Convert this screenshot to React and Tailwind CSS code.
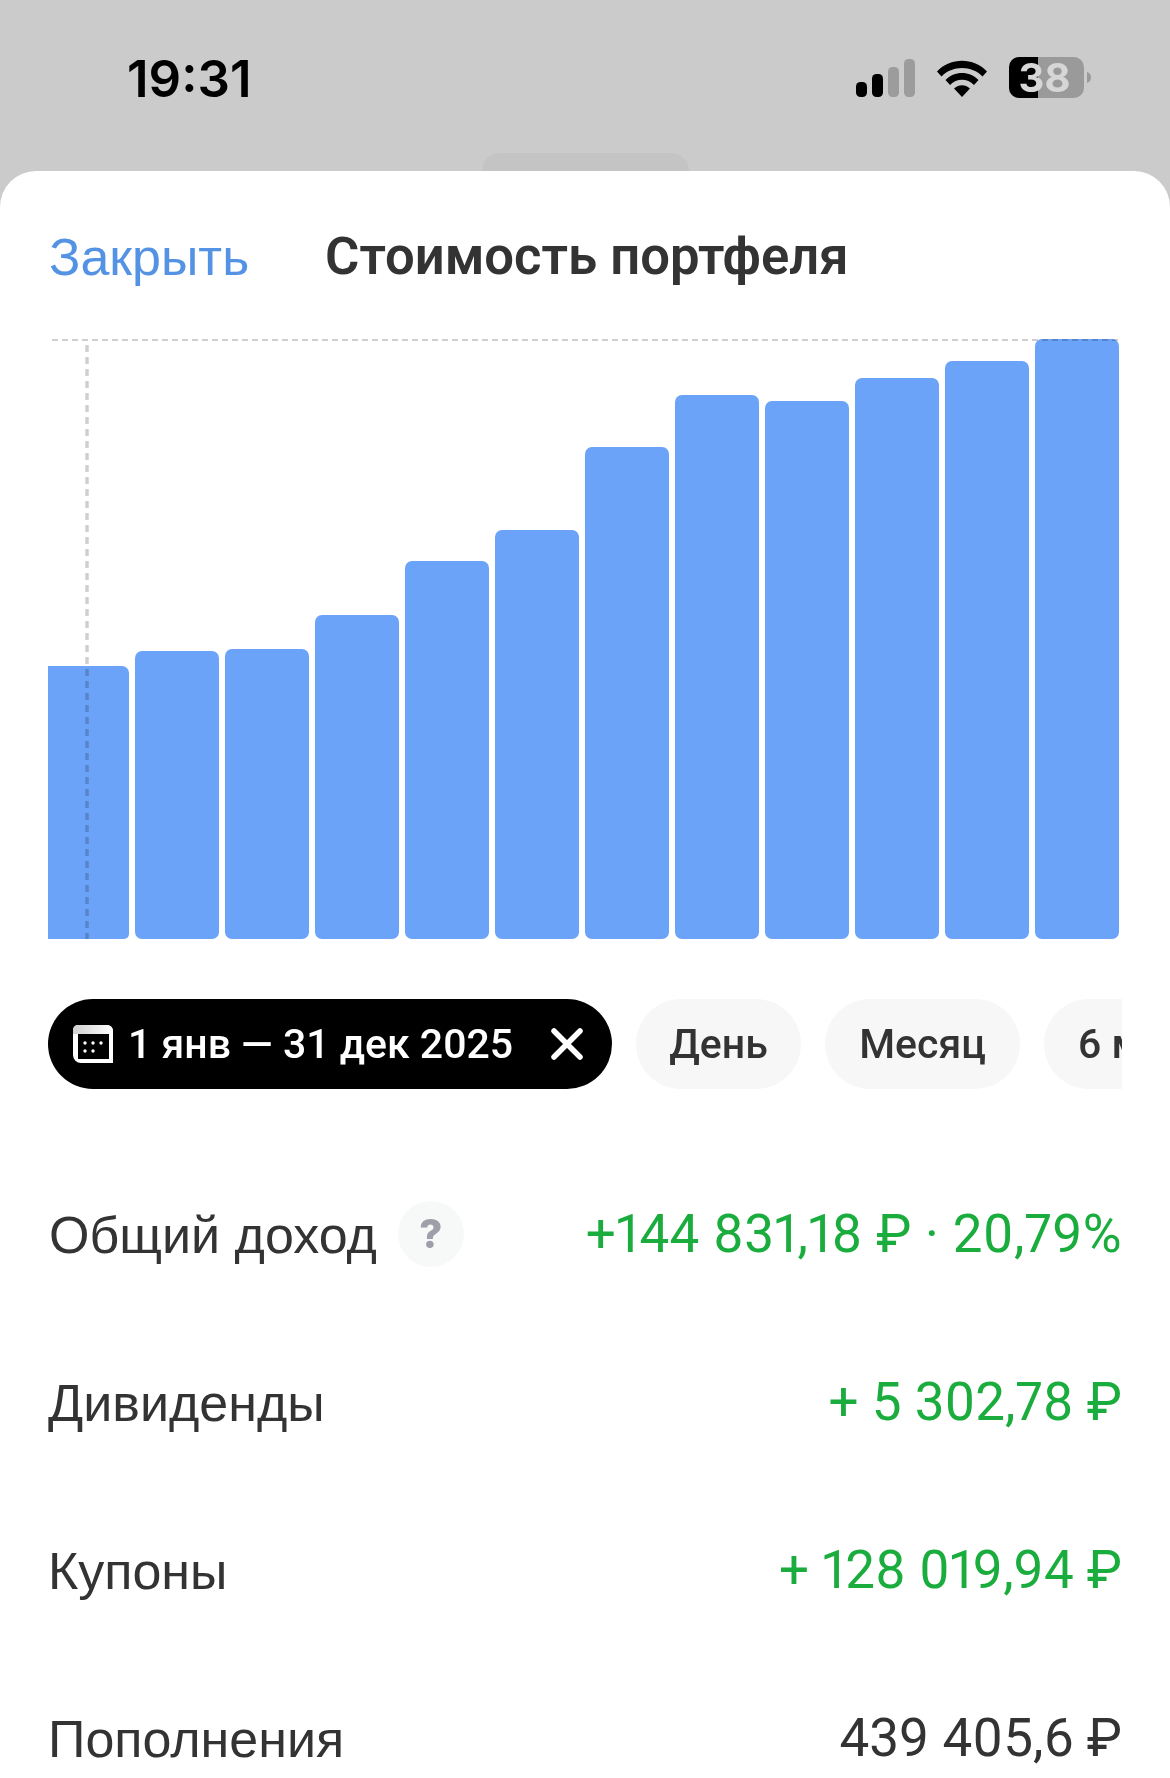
const bars = [273, 288, 290, 324, 378, 409, 492, 544, 538, 561, 578, 600];
const rows = [
  { label: "Дивиденды", value: "+ 5 302,78 ₽", green: true },
  { label: "Купоны", value: "+ 128 019,94 ₽", green: true },
  { label: "Пополнения", value: "439 405,6 ₽", green: false },
];
const labelFont = "pt-[1px] font-['Liberation_Sans',sans-serif] text-[52px] text-[#333333]";
const valueFont = "pt-[2px] font-['Roboto',sans-serif] text-[53px] proportional-nums";

function StatusIcons() {
  return (
    <svg width="240" height="44" viewBox="0 0 240 44" className="block">
      <rect x="5" y="26" width="11" height="15" rx="4.5" fill="#000" />
      <rect x="21" y="18" width="11" height="23" rx="4.5" fill="#000" />
      <rect x="37" y="11" width="11" height="30" rx="4.5" fill="#9c9c9c" />
      <rect x="53" y="3" width="11" height="38" rx="4.5" fill="#9c9c9c" />
      <path d="M86 15.5 C99 1 123 1 136 15.5 L131.5 20.5 C121 9 101 9 90.5 20.5 Z" fill="#000" />
      <path d="M94.5 24 C103 14.5 119 14.5 127.5 24 L123 29 C116.5 22 105.5 22 99 29 Z" fill="#000" />
      <path d="M103 32.5 C107.5 28 114.5 28 119 32.5 L111 41 Z" fill="#000" />
      <rect x="158" y="1" width="75" height="41" rx="10" fill="#9a9a9a" />
      <path d="M168 1 H187 V42 H168 A10 10 0 0 1 158 32 V11 A10 10 0 0 1 168 1 Z" fill="#000" />
      <path d="M236 16 C239 17 240 19 240 21.5 C240 24 239 26 236 27 Z" fill="#9a9a9a" />
    </svg>
  );
}

function CalendarIcon() {
  return (
    <svg width="40" height="38" viewBox="0 0 40 38" className="shrink-0">
      <defs>
        <linearGradient id="calTop" x1="0" y1="0" x2="1" y2="0">
          <stop offset="0" stopColor="#d0d0d0" />
          <stop offset="1" stopColor="#ffffff" />
        </linearGradient>
      </defs>
      <path d="M5 0 H34 A6 6 0 0 1 40 6 V38 H8 A8 8 0 0 1 0 30 V5 A5 5 0 0 1 5 0 Z" fill="#fff" />
      <path d="M5 0 H34 A6 6 0 0 1 40 6 V9 H0 V5 A5 5 0 0 1 5 0 Z" fill="url(#calTop)" />
      <rect x="5" y="9" width="31" height="25" fill="#000" />
      <g fill="#fff">
        <circle cx="12" cy="18" r="1.7" /><circle cx="20" cy="18" r="1.7" /><circle cx="28" cy="18" r="1.7" />
        <circle cx="12" cy="26" r="1.7" /><circle cx="20" cy="26" r="1.7" />
      </g>
    </svg>
  );
}

export default function App() {
  return (
    <div className="w-[1170px] h-[1778px] overflow-hidden bg-[#cbcbcb] flex flex-col">
      <div className="h-[153px] shrink-0 flex justify-between pl-[127px] pr-[79px] pt-[49px]">
        <span className="font-['Inter',sans-serif] font-semibold text-[51px] leading-[60px] text-black">19:31</span>
        <div className="relative h-[44px] mt-[7px]">
          <StatusIcons />
          <span className="absolute right-[9px] top-0 w-[75px] text-center font-['Inter',sans-serif] font-bold text-[40px] leading-[43px] text-[#d6d6d6]">38</span>
        </div>
      </div>
      <div className="h-[18px] shrink-0 flex justify-center">
        <div className="w-[207px] h-[18px] rounded-t-[30px] bg-[#c4c4c4]" />
      </div>
      <div className="flex-1 shrink-0 bg-white rounded-t-[36px] flex flex-col">
        <div className="h-[168px] shrink-0 pt-[3px] pl-[49px] flex items-center">
          <span className="w-[277px] font-['Liberation_Sans',sans-serif] text-[52px] text-[#5492e4]">Закрыть</span>
          <span className="-ml-[1px] font-['Roboto',sans-serif] font-semibold text-[52.6px] text-[#333333]">Стоимость портфеля</span>
        </div>
        <div className="relative ml-[48px] w-[1071px] h-[600px] flex items-end gap-[6px] shrink-0">
          {bars.map((h, i) => (
            <div
              key={i}
              className={i === 0 ? "w-[81px] bg-[#6ba3f9] rounded-tr-[7px] rounded-br-[5px]" : "w-[84px] bg-[#6ba3f9] rounded-[7px]"}
              style={{ height: h }}
            />
          ))}
          <svg width="1071" height="600" viewBox="0 0 1071 600" className="absolute left-0 top-0 mix-blend-multiply">
            <line x1="4" y1="1" x2="1071" y2="1" stroke="#cfcfcf" strokeWidth="2" strokeDasharray="6 4" />
            <line x1="39" y1="6" x2="39" y2="600" stroke="#cfcfcf" strokeWidth="3.5" strokeDasharray="7 5" />
          </svg>
        </div>
        <div className="mt-[60px] ml-[48px] w-[1074px] h-[90px] overflow-hidden flex gap-[24px] shrink-0 font-['Roboto',sans-serif] font-medium text-[41px] text-[#333333]">
          <div className="w-[564px] shrink-0 h-[90px] rounded-full bg-black text-white flex items-center pl-[25px]">
            <CalendarIcon />
            <span className="ml-[15px] pt-[2px] w-[386px] whitespace-nowrap">1 янв — 31 дек 2025</span>
            <svg width="32" height="32" viewBox="0 0 32 32" className="ml-[37px] shrink-0">
              <path d="M3 3 L29 29 M29 3 L3 29" stroke="#fff" strokeWidth="5.5" strokeLinecap="round" />
            </svg>
          </div>
          <div className="w-[165px] pt-[2px] shrink-0 rounded-full bg-[#f7f7f7] flex items-center justify-center">День</div>
          <div className="w-[195px] pt-[2px] shrink-0 rounded-full bg-[#f7f7f7] flex items-center justify-center">Месяц</div>
          <div className="w-[160px] pt-[2px] shrink-0 rounded-full bg-[#f7f7f7] flex items-center pl-[34px] whitespace-nowrap">6 мес</div>
        </div>
        <div className="mt-[61px] ml-[48px] w-[1074px] flex flex-col shrink-0">
          <div className="h-[168px] shrink-0 flex items-center justify-between">
            <div className="flex items-center pl-[1px]">
              <span className={labelFont}>Общий доход</span>
              <span className="ml-[21px] w-[66px] h-[66px] rounded-full bg-[#f7f8f8] flex items-center justify-center font-['Inter',sans-serif] font-extrabold text-[40px] text-[#9e9fa9]">?</span>
            </div>
            <span className={`${valueFont} tracking-[0.3px] text-[#1aad3e]`}>+144 831,18 ₽ · 20,79%</span>
          </div>
          {rows.map((r) => (
            <div key={r.label} className="h-[168px] flex items-center justify-between shrink-0">
              <span className={labelFont}>{r.label}</span>
              <span className={`${valueFont} ${r.green ? "text-[#1aad3e]" : "text-[#333333]"}`}>{r.value}</span>
            </div>
          ))}
        </div>
      </div>
    </div>
  );
}
